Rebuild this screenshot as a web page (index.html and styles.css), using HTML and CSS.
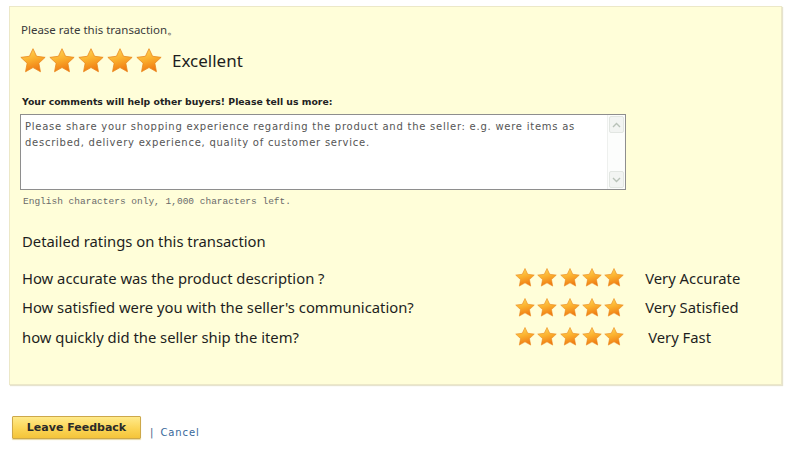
FILE: index.html
```html
<!DOCTYPE html>
<html>
<head>
<meta charset="utf-8">
<link rel="stylesheet" href="styles.css">
</head>
<body>
<svg class="defs" width="0" height="0">
  <defs>
    <linearGradient id="sg" x1="0.3" y1="0" x2="0.6" y2="1">
      <stop offset="0" stop-color="#ffd65a"/>
      <stop offset="0.45" stop-color="#fbb12e"/>
      <stop offset="1" stop-color="#ee7410"/>
    </linearGradient>
    <symbol id="star" viewBox="0 0 24 23">
      <path d="M12 0.6 L15.3 7.6 L23.2 8.6 L17.4 14 L18.9 21.9 L12 18 L5.1 21.9 L6.6 14 L0.8 8.6 L8.7 7.6 Z" fill="url(#sg)" stroke="#e8861c" stroke-width="0.7" stroke-linejoin="round"/>
    </symbol>
  </defs>
</svg>
<div class="panel">
  <div class="title">Please rate this transaction。</div>
  <div class="overall">
    <div class="stars big">
      <svg><use href="#star"/></svg><svg><use href="#star"/></svg><svg><use href="#star"/></svg><svg><use href="#star"/></svg><svg><use href="#star"/></svg>
    </div>
    <span class="overall-label">Excellent</span>
  </div>
  <div class="comment-label">Your comments will help other buyers! Please tell us more:</div>
  <div class="textbox">
    <textarea class="ta">Please share your shopping experience regarding the product and the seller: e.g. were items as described, delivery experience, quality of customer service.</textarea>
    <div class="scroll">
      <div class="sbtn"><svg width="9" height="6" viewBox="0 0 9 6"><path d="M1 5 L4.5 1.5 L8 5" fill="none" stroke="#b8c2b8" stroke-width="1.4"/></svg></div>
      <div class="strack"></div>
      <div class="sbtn"><svg width="9" height="6" viewBox="0 0 9 6"><path d="M1 1 L4.5 4.5 L8 1" fill="none" stroke="#b8c2b8" stroke-width="1.4"/></svg></div>
    </div>
  </div>
  <div class="hint">English characters only, 1,000 characters left.</div>
  <div class="detail-title">Detailed ratings on this transaction</div>
  <div class="row">
    <span class="q">How accurate was the product description ?</span>
    <div class="stars small">
      <svg><use href="#star"/></svg><svg><use href="#star"/></svg><svg><use href="#star"/></svg><svg><use href="#star"/></svg><svg><use href="#star"/></svg>
    </div>
    <span class="a">Very Accurate</span>
  </div>
  <div class="row">
    <span class="q">How satisfied were you with the seller's communication?</span>
    <div class="stars small">
      <svg><use href="#star"/></svg><svg><use href="#star"/></svg><svg><use href="#star"/></svg><svg><use href="#star"/></svg><svg><use href="#star"/></svg>
    </div>
    <span class="a">Very Satisfied</span>
  </div>
  <div class="row">
    <span class="q">how quickly did the seller ship the item?</span>
    <div class="stars small">
      <svg><use href="#star"/></svg><svg><use href="#star"/></svg><svg><use href="#star"/></svg><svg><use href="#star"/></svg><svg><use href="#star"/></svg>
    </div>
    <span class="a a-fast">Very Fast</span>
  </div>
</div>
<div class="actions">
  <button class="btn">Leave Feedback</button>
  <span class="sep">|</span>
  <a class="cancel" href="#">Cancel</a>
</div>
</body>
</html>
```

FILE: styles.css
```css
html, body {
  margin: 0;
  padding: 0;
  background: #ffffff;
}
body {
  width: 790px;
  height: 456px;
  overflow: hidden;
  font-family: "Noto Sans", "Open Sans", sans-serif;
  color: #222;
}
.defs {
  position: absolute;
  width: 0;
  height: 0;
}
.panel {
  margin: 6px 0 0 9px;
  width: 760px;
  height: 377px;
  background: #fffed9;
  border: 1px solid #ece8c8;
  box-shadow: 1px 1px 1px #e6e3cf;
  padding: 0 0 0 11px;
  box-sizing: content-box;
}
.title {
  padding-top: 16px;
  font-size: 11.5px;
  line-height: 14px;
  color: #3a3a3a;
}
.overall {
  margin-top: 10px;
  height: 26px;
  display: flex;
  align-items: center;
}
.stars {
  display: flex;
}
.stars.big {
  gap: 3px;
  margin-left: -1px;
}
.stars.big svg {
  width: 26px;
  height: 25px;
}
.overall-label {
  margin-left: 10px;
  font-size: 17px;
  color: #1e1e1e;
}
.comment-label {
  margin-top: 23px;
  font-family: "DejaVu Sans", Verdana, sans-serif;
  font-weight: bold;
  font-size: 9.3px;
  line-height: 12px;
  color: #222;
  padding-left: 1px;
}
.textbox {
  margin: 6px 0 0 -1px;
  width: 606px;
  height: 76px;
  box-sizing: border-box;
  border: 1px solid #8e8e8e;
  background: #fff;
  display: flex;
}
.ta {
  flex: 1;
  border: 0;
  outline: 0;
  resize: none;
  margin: 0;
  padding: 4px 4px 0 4px;
  font-family: "DejaVu Sans", Verdana, sans-serif;
  font-size: 10px;
  letter-spacing: 0.75px;
  line-height: 16px;
  color: #555;
  background: #fff;
  overflow: hidden;
}
.scroll {
  width: 17px;
  display: flex;
  flex-direction: column;
  border-left: 1px solid #eef0ee;
  background: #fcfdfc;
}
.sbtn {
  height: 15px;
  margin: 1px;
  display: flex;
  align-items: center;
  justify-content: center;
  border: 1px solid #e2e6e2;
  border-radius: 2px;
  background: #f2f4f2;
}
.strack {
  flex: 1;
}
.hint {
  margin-top: 6px;
  font-family: "Liberation Mono", monospace;
  font-size: 9.5px;
  line-height: 12px;
  color: #6a6a6a;
  padding-left: 2px;
}
.detail-title {
  margin-top: 24px;
  font-size: 14.8px;
  line-height: 18px;
  padding-left: 1px;
  color: #1e1e1e;
}
.row {
  margin-top: 0;
  height: 29.5px;
  display: flex;
  align-items: center;
  font-size: 14.8px;
  color: #1e1e1e;
  padding-left: 1px;
}
.detail-title + .row {
  margin-top: 13px;
}
.q {
  width: 493px;
}
.stars.small {
  gap: 2.3px;
}
.stars.small svg {
  width: 20px;
  height: 19px;
}
.a {
  margin-left: 21px;
}
.a-fast {
  margin-left: 24px;
}
.actions {
  margin: 31px 0 0 12px;
  display: flex;
  align-items: flex-start;
}
.btn {
  width: 129px;
  height: 23px;
  margin: 0;
  padding: 0;
  border: 1px solid #cda84a;
  border-radius: 1px;
  background: linear-gradient(#ffea8a, #fbd556 55%, #f4c43a);
  font-family: "DejaVu Sans", Verdana, sans-serif;
  font-weight: bold;
  font-size: 11px;
  color: #2a2a2a;
  box-shadow: 0 1px 1px #e8d9a0;
}
.sep {
  margin: 11px 0 0 9px;
  font-family: "DejaVu Sans", Verdana, sans-serif;
  font-size: 10px;
  line-height: 12px;
  color: #3b5f86;
}
.cancel {
  margin: 11px 0 0 7px;
  font-family: "DejaVu Sans", Verdana, sans-serif;
  font-size: 10px;
  letter-spacing: 0.9px;
  line-height: 12px;
  color: #37689b;
  text-decoration: none;
}
```
